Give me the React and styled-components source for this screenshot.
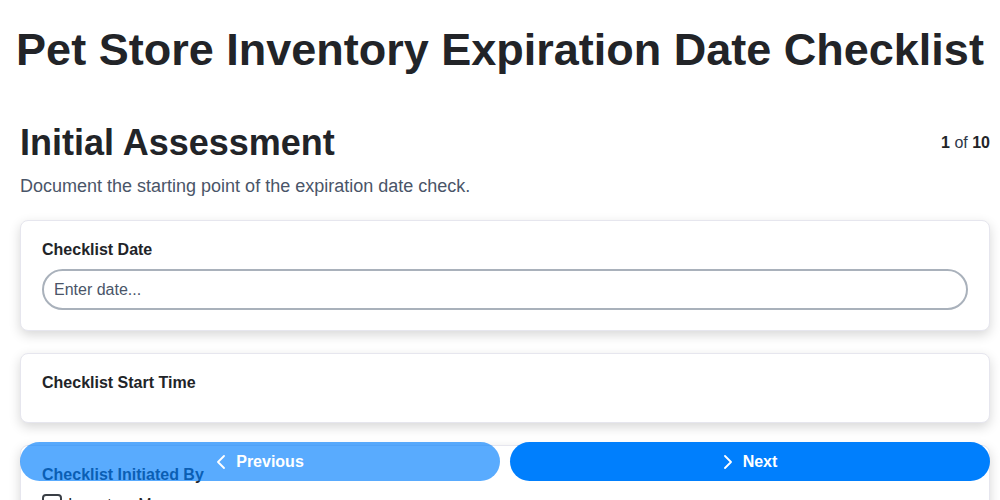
import React from "react";
import styled, { createGlobalStyle } from "styled-components";

const GlobalStyle = createGlobalStyle`
    * {
        box-sizing: border-box;
    }
    body {
        margin: 0;
        background: #ffffff;
        color: #212529;
        font-family: "Liberation Sans", Arial, sans-serif;
    }
`;

const Page = styled.div`
    padding: 0 10px 120px 20px;
`;

const Title = styled.h1`
    margin: 23px -10px 0 -20px;
    font-size: 45px;
    line-height: 1.2;
    font-weight: 700;
    text-align: center;
    color: #222428;
`;

const SectionHeader = styled.div`
    display: flex;
    justify-content: space-between;
    align-items: center;
    margin-top: 44px;
`;

const SectionTitle = styled.h2`
    margin: 0;
    font-size: 36px;
    line-height: 1.2;
    font-weight: 700;
    color: #222428;
`;

const Counter = styled.div`
    font-size: 16px;
    line-height: 1.2;
    color: #2d3748;
    b {
        color: #222428;
    }
`;

const Description = styled.p`
    margin: 9px 0 20px;
    font-size: 18px;
    line-height: 1.5;
    color: #4a5568;
`;

const Fields = styled.div`
    display: flex;
    flex-direction: column;
    gap: 22px;
`;

const Card = styled.div`
    background: #ffffff;
    border: 1px solid #e6e6ee;
    border-radius: 8px;
    padding: 20px 21px;
    box-shadow: 0 4px 12px rgba(0, 0, 0, 0.16);
`;

const Label = styled.div`
    font-size: 16px;
    line-height: 18px;
    font-weight: 700;
    color: #222428;
    margin-bottom: 10px;
`;

const TextInput = styled.input`
    display: block;
    width: 100%;
    height: 41px;
    padding: 0 10px;
    border: 2px solid #a9b1bb;
    border-radius: 21px;
    font-family: inherit;
    font-size: 16px;
    color: #222428;
    outline: none;
    &::placeholder {
        color: #4a5568;
    }
`;

const Empty = styled.div``;

const Options = styled.div`
    display: flex;
    flex-direction: column;
    gap: 10px;
`;

const Option = styled.label`
    display: flex;
    align-items: center;
    gap: 6px;
    font-size: 16px;
    line-height: 1.2;
    color: #222428;
`;

const Box = styled.span`
    width: 20px;
    height: 20px;
    border: 2px solid #3a3f46;
    border-radius: 4px;
    flex: none;
`;

const Nav = styled.div`
    position: fixed;
    left: 20px;
    right: 10px;
    bottom: 19px;
    display: grid;
    grid-template-columns: 1fr 1fr;
    gap: 10px;
`;

const NavButton = styled.button`
    display: flex;
    align-items: center;
    justify-content: center;
    gap: 10px;
    height: 39px;
    border: none;
    border-radius: 20px;
    background: #007ffd;
    color: #ffffff;
    font-family: inherit;
    font-size: 16px;
    font-weight: 700;
    opacity: ${(p) => (p.$disabled ? 0.65 : 1)};
    cursor: pointer;
`;

const Chevron = ({ dir }) => (
    <svg width="10" height="14" viewBox="0 0 10 14" fill="none">
        <polyline
            points={dir === "left" ? "8,1 2,7 8,13" : "2,1 8,7 2,13"}
            stroke="#ffffff"
            strokeWidth="1.8"
            strokeLinecap="round"
            strokeLinejoin="round"
        />
    </svg>
);

export default function App() {
    return (
        <>
            <GlobalStyle />
            <Page>
                <Title>Pet Store Inventory Expiration Date Checklist</Title>
                <SectionHeader>
                    <SectionTitle>Initial Assessment</SectionTitle>
                    <Counter>
                        <b>1</b> of <b>10</b>
                    </Counter>
                </SectionHeader>
                <Description>Document the starting point of the expiration date check.</Description>
                <Fields>
                    <Card>
                        <Label>Checklist Date</Label>
                        <TextInput placeholder="Enter date..." />
                    </Card>
                    <Card>
                        <Label>Checklist Start Time</Label>
                        <Empty />
                    </Card>
                    <Card>
                        <Label>Checklist Initiated By</Label>
                        <Options>
                            <Option><Box />Inventory Manager</Option>
                            <Option><Box />Store Manager</Option>
                            <Option><Box />Staff Member</Option>
                        </Options>
                    </Card>
                </Fields>
            </Page>
            <Nav>
                <NavButton $disabled>
                    <Chevron dir="left" />
                    Previous
                </NavButton>
                <NavButton>
                    <Chevron dir="right" />
                    Next
                </NavButton>
            </Nav>
        </>
    );
}
